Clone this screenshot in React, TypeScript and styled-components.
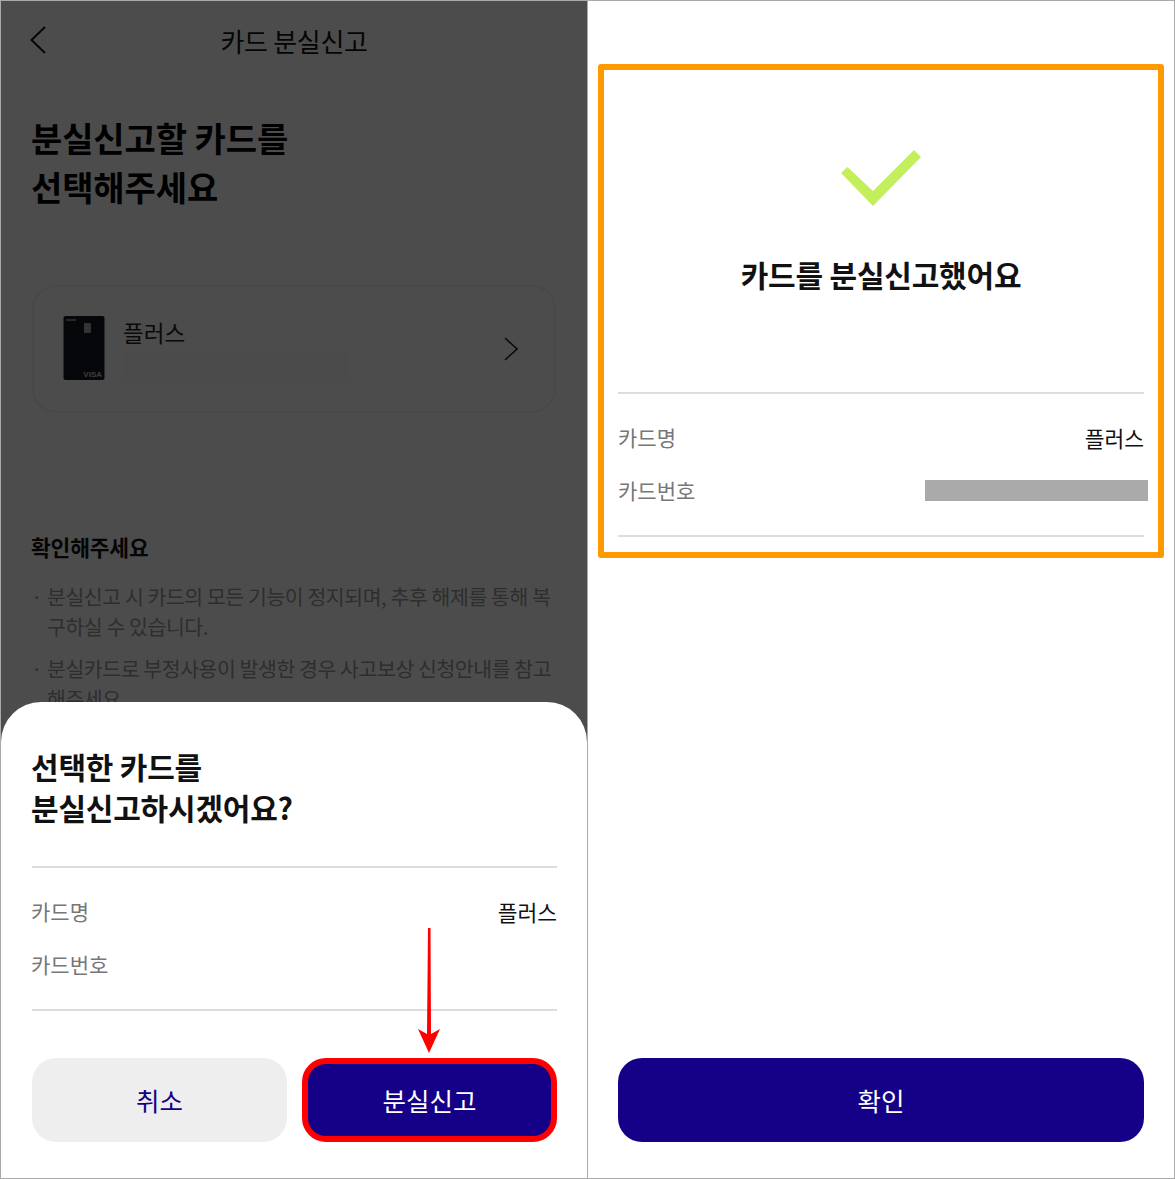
import styled, { createGlobalStyle } from "styled-components";

const GlobalStyle = createGlobalStyle`
  * { box-sizing: border-box; }
  html, body { margin: 0; padding: 0; background: #fff; }
  body { font-family: "Noto Sans CJK KR", "Noto Sans", sans-serif; }
`;

const Frame = styled.div`
  width: 1175px;
  height: 1179px;
  display: grid;
  grid-template-columns: 586px 586px;
  gap: 1px;
  border: 1px solid #aaa;
  background: #aaa;
`;

const Panel = styled.section`
  position: relative;
  overflow: hidden;
  background: #fff;
  display: flex;
  flex-direction: column;
`;

const Dim = styled.div`
  position: absolute;
  inset: 0;
  background: rgba(0, 0, 0, 0.7);
`;

const Header = styled.header`
  height: 80px;
  flex: none;
  display: grid;
  grid-template-columns: 1fr auto 1fr;
  align-items: center;
  padding: 0 28px 2px;
  color: #111;

  svg { display: block; }
`;

const HeaderTitle = styled.h1`
  margin: 0;
  font-size: 26px;
  font-weight: 400;
  letter-spacing: -0.3px;
`;

const Heading = styled.h2`
  margin: 32px 0 0;
  padding-left: 30px;
  font-size: 34px;
  line-height: 49px;
  font-weight: 700;
  letter-spacing: -0.1px;
  color: #000;
`;

const CardRow = styled.div`
  margin: 74px 31px 0;
  height: 128px;
  flex: none;
  border: 2px solid #f1f1f1;
  border-radius: 24px;
  background: #fff;
  display: flex;
  align-items: center;
  padding: 0 36px 0 29px;
  gap: 18px;

  > svg:first-child { margin-bottom: 2px; }
`;

const CardInfo = styled.div`
  flex: 1;
  align-self: flex-start;
  padding-top: 29px;
  font-size: 22.5px;
  line-height: 32px;
  color: #222;
`;

const MaskedLine = styled.div`
  margin-top: 3px;
  width: 225px;
  height: 30px;
  background: #fcfcfc;
`;

const Notice = styled.div`
  padding: 119px 30px 0;
`;

const NoticeTitle = styled.h3`
  margin: 0 0 19px;
  font-size: 21.5px;
  line-height: 30px;
  font-weight: 700;
  letter-spacing: -0.2px;
  color: #111;
`;

const NoticeItem = styled.p`
  position: relative;
  margin: 0 0 12px;
  padding-left: 16px;
  font-size: 20.5px;
  line-height: 30px;
  letter-spacing: -0.43px;
  color: #999;

  &::before {
    content: "·";
    position: absolute;
    left: 0;
  }
`;

const Sheet = styled.div`
  position: absolute;
  left: 0;
  right: 0;
  bottom: 0;
  height: 476px;
  background: #fff;
  border-radius: 40px 40px 0 0;
  padding: 44px 30px 0 31px;
`;

const SheetTitle = styled.h2`
  margin: 0 0 38px -1px;
  font-size: 30px;
  line-height: 41px;
  font-weight: 700;
  letter-spacing: -0.2px;
  color: #111;
`;

const Details = styled.dl`
  margin: 0;
  height: 145px;
  padding-top: 22px;
  border-top: 2px solid #ddd;
  border-bottom: 2px solid #ddd;
`;

const DetailRow = styled.div`
  display: flex;
  justify-content: space-between;
  align-items: center;
  height: 42px;
  margin-bottom: 11px;
`;

const DetailLabel = styled.dt`
  margin-left: -1px;
  font-size: 21px;
  color: #777;
`;

const DetailValue = styled.dd`
  margin: 0;
  font-size: 21.5px;
  color: #111;
`;

const MaskedValue = styled.dd`
  margin: 0 -4px 0 0;
  width: 223px;
  height: 21px;
  background: #aaa;
`;

const ButtonRow = styled.div`
  display: grid;
  grid-template-columns: 255px 255px;
  gap: 15px;
  margin-top: 47px;
`;

const Button = styled.button<{ $tone: "primary" | "muted"; $marked?: boolean }>`
  height: 84px;
  width: 100%;
  padding: 0 0 2px;
  border: ${(p) => (p.$marked ? "6px solid #ff0000" : "none")};
  border-radius: 24px;
  font-family: inherit;
  font-size: 25.5px;
  font-weight: 400;
  background: ${(p) => (p.$tone === "primary" ? "#150088" : "#eeeeee")};
  color: ${(p) => (p.$tone === "primary" ? "#fff" : "#150088")};
`;

const DoneSummary = styled.div`
  flex: 1;
  padding: 0 30px;

  ${DetailLabel} { margin-left: 0; }
`;

const CheckWrap = styled.div`
  display: flex;
  justify-content: center;
  padding: 149px 0 0;
  margin-left: -1px;

  svg { display: block; }
`;

const DoneTitle = styled.h2`
  margin: 46px 0 96px;
  text-align: center;
  font-size: 30px;
  line-height: 44px;
  font-weight: 700;
  letter-spacing: -0.2px;
  color: #111;
`;

const Footer = styled.div`
  padding: 0 30px 36px;
`;

const OrangeBox = styled.div`
  position: absolute;
  left: 10px;
  top: 63px;
  width: 566px;
  height: 494px;
  border: 6px solid #ff9900;
  border-radius: 3px;
  pointer-events: none;
`;

const RedArrow = styled.svg`
  position: absolute;
  left: 416px;
  top: 927px;
`;

const BackIcon = () => (
  <svg width="18" height="28" viewBox="0 0 18 28" fill="none">
    <path d="M16 1 L2.5 14 L16 27" stroke="#111" strokeWidth="2" />
  </svg>
);

const ChevronIcon = () => (
  <svg width="14" height="24" viewBox="0 0 14 24" fill="none">
    <path d="M1 1 L13 12 L1 23" stroke="#222" strokeWidth="1.6" />
  </svg>
);

const CardThumb = () => (
  <svg width="42" height="64" viewBox="0 0 42 64">
    <rect x="0.5" y="0" width="41" height="64" rx="2" fill="#141a22" />
    <rect x="3" y="3" width="10" height="2" fill="#888" />
    <rect x="21" y="7" width="7" height="10" rx="1" fill="#aaa" />
    <text x="39" y="61" textAnchor="end" fontFamily="Liberation Sans, sans-serif" fontSize="8" fontWeight="700" fill="#ccc">
      VISA
    </text>
  </svg>
);

const CheckIcon = () => (
  <svg width="80" height="56" viewBox="0 0 80 56">
    <path d="M6.5 17 L0 23 L32 56 L80 7 L73 0 L32 41 Z" fill="#c3ef5c" />
  </svg>
);

const App = () => (
  <>
    <GlobalStyle />
    <Frame>
      <Panel>
        <Header>
          <BackIcon />
          <HeaderTitle>카드 분실신고</HeaderTitle>
        </Header>
        <Heading>
          분실신고할 카드를
          <br />
          선택해주세요
        </Heading>
        <CardRow>
          <CardThumb />
          <CardInfo>
            플러스
            <MaskedLine />
          </CardInfo>
          <ChevronIcon />
        </CardRow>
        <Notice>
          <NoticeTitle>확인해주세요</NoticeTitle>
          <NoticeItem>분실신고 시 카드의 모든 기능이 정지되며, 추후 해제를 통해 복구하실 수 있습니다.</NoticeItem>
          <NoticeItem>분실카드로 부정사용이 발생한 경우 사고보상 신청안내를 참고해주세요.</NoticeItem>
        </Notice>
        <Dim />
        <Sheet>
          <SheetTitle>
            선택한 카드를
            <br />
            분실신고하시겠어요?
          </SheetTitle>
          <Details>
            <DetailRow>
              <DetailLabel>카드명</DetailLabel>
              <DetailValue>플러스</DetailValue>
            </DetailRow>
            <DetailRow>
              <DetailLabel>카드번호</DetailLabel>
            </DetailRow>
          </Details>
          <ButtonRow>
            <Button $tone="muted">취소</Button>
            <Button $tone="primary" $marked>
              분실신고
            </Button>
          </ButtonRow>
        </Sheet>
        <RedArrow width="24" height="126" viewBox="0 0 24 126">
          <path d="M11 0 H13.5 L14 106 L23 101 L12 125 L1 101 L10 106 Z" fill="#ff0000" />
        </RedArrow>
      </Panel>
      <Panel>
        <DoneSummary>
          <CheckWrap>
            <CheckIcon />
          </CheckWrap>
          <DoneTitle>카드를 분실신고했어요</DoneTitle>
          <Details>
            <DetailRow>
              <DetailLabel>카드명</DetailLabel>
              <DetailValue>플러스</DetailValue>
            </DetailRow>
            <DetailRow>
              <DetailLabel>카드번호</DetailLabel>
              <MaskedValue />
            </DetailRow>
          </Details>
        </DoneSummary>
        <Footer>
          <Button $tone="primary">확인</Button>
        </Footer>
        <OrangeBox />
      </Panel>
    </Frame>
  </>
);

export default App;
